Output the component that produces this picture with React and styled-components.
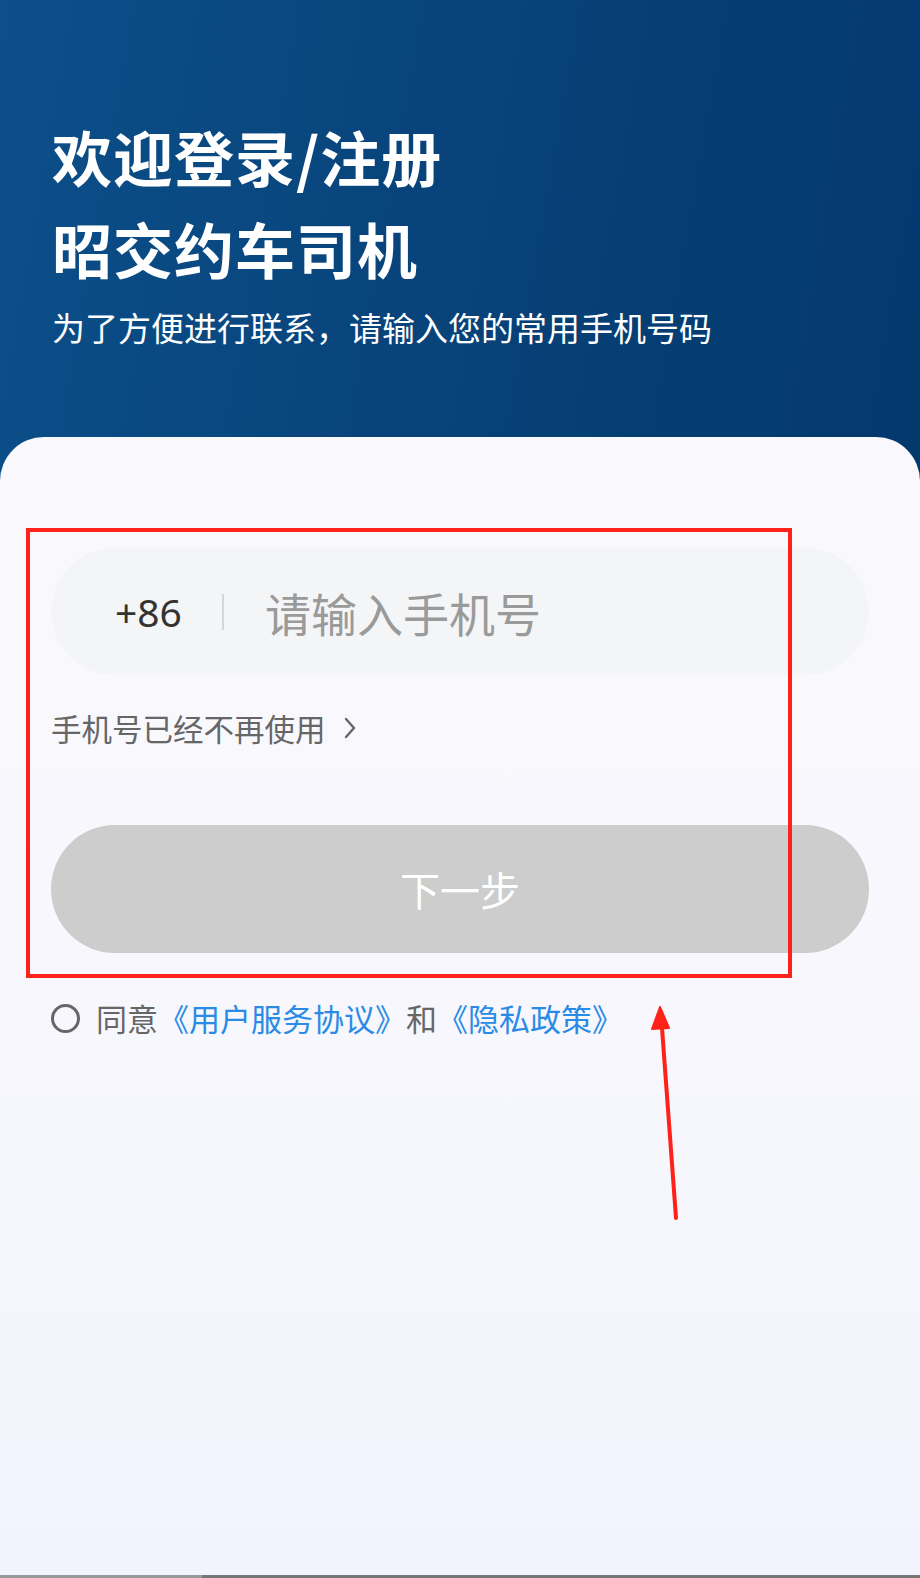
import React from 'react'
import styled, {createGlobalStyle} from 'styled-components'

const GlobalStyle = createGlobalStyle`
  html, body { margin: 0; padding: 0; }
  body { font-family: "Noto Sans", "Noto Sans CJK SC", sans-serif; }
  * { box-sizing: border-box; }
`

const Page = styled.div`
  position: relative;
  width: 920px;
  height: 1578px;
  display: flex;
  flex-direction: column;
  background: linear-gradient(100deg, #0c4f8a 0%, #063f74 55%, #02356a 100%);
  overflow: hidden;
`

const Header = styled.header`
  height: 437px;
  flex-shrink: 0;
  padding: 110px 52px 0;
  color: #fff;
`

const Title = styled.h1`
  margin: 0;
  font-family: "Noto Sans CJK SC", sans-serif;
  font-size: 60px;
  line-height: 92px;
  font-weight: 700;
  letter-spacing: 1px;
`

const Subtitle = styled.p`
  margin: 8px 0 0;
  font-family: "Noto Sans CJK SC", sans-serif;
  font-size: 33px;
  line-height: 50px;
  font-weight: 400;
`

const Card = styled.main`
  flex: 1;
  display: flex;
  flex-direction: column;
  padding: 111px 51px 0;
  border-radius: 44px 44px 0 0;
  background: linear-gradient(180deg, #f9f9fd 0%, #f7f7fd 50%, #f3f3fd 100%);
`

const PhoneField = styled.div`
  height: 127px;
  display: flex;
  align-items: center;
  padding-left: 64px;
  border-radius: 64px;
  background: #f4f5f7;
`

const Prefix = styled.span`
  font-size: 39px;
  color: #333;
`

const Divider = styled.span`
  width: 2px;
  height: 36px;
  margin: 0 41px 0 40px;
  background: #d6d6d6;
`

const Input = styled.input`
  flex: 1;
  border: none;
  outline: none;
  background: transparent;
  font-family: "Noto Sans CJK SC", sans-serif;
  font-size: 46px;
  color: #333;
  padding: 0;
  &::placeholder { color: #9a9a9a; }
`

const LinkRow = styled.a`
  margin-top: 33px;
  display: flex;
  align-items: center;
  gap: 17px;
  font-family: "Noto Sans CJK SC", sans-serif;
  font-size: 30.5px;
  line-height: 40px;
  color: #666;
  text-decoration: none;
`

const NextButton = styled.button`
  margin-top: 77px;
  height: 128px;
  border: none;
  border-radius: 64px;
  background: #cdcdcd;
  color: #fff;
  font-family: "Noto Sans CJK SC", sans-serif;
  font-size: 40px;
`

const Agreement = styled.label`
  margin-top: 45px;
  display: flex;
  align-items: center;
  font-family: "Noto Sans CJK SC", sans-serif;
  font-size: 31px;
  line-height: 40px;
  color: #666;
`

const Radio = styled.span`
  width: 29px;
  height: 29px;
  margin-right: 16px;
  border: 3px solid #666;
  border-radius: 50%;
`

const Doc = styled.span`
  color: #2a8be6;
`

const BottomEdge = styled.div`
  height: 3px;
  flex-shrink: 0;
  background: linear-gradient(90deg, #9a9a9a 0 22%, #777 22% 100%);
`

const Highlight = styled.div`
  position: absolute;
  left: 26px;
  top: 528px;
  width: 766px;
  height: 450px;
  border: 4px solid #ff2218;
  pointer-events: none;
`

const Arrow = styled.svg`
  position: absolute;
  left: 640px;
  top: 1000px;
  pointer-events: none;
`

const Chevron = () => (
  <svg width="14" height="24" viewBox="0 0 14 24">
    <path d="M3 3 L11 12 L3 21" fill="none" stroke="#666" strokeWidth="2.4" strokeLinecap="round" strokeLinejoin="round"/>
  </svg>
)

export default function App() {
  return (
    <>
      <GlobalStyle/>
      <Page>
        <Header>
          <Title>欢迎登录/注册<br/>昭交约车司机</Title>
          <Subtitle>为了方便进行联系，请输入您的常用手机号码</Subtitle>
        </Header>
        <Card>
          <PhoneField>
            <Prefix>+86</Prefix>
            <Divider/>
            <Input placeholder="请输入手机号"/>
          </PhoneField>
          <LinkRow href="#">手机号已经不再使用<Chevron/></LinkRow>
          <NextButton>下一步</NextButton>
          <Agreement>
            <Radio/>
            同意<Doc>《用户服务协议》</Doc>和<Doc>《隐私政策》</Doc>
          </Agreement>
        </Card>
        <BottomEdge/>
        <Highlight/>
        <Arrow width="50" height="225" viewBox="0 0 50 225">
          <path d="M36 218 L22 28" stroke="#ff2218" strokeWidth="4" strokeLinecap="round"/>
          <path d="M20 7 L12 29 L29 28 Z" fill="#ff2218" stroke="#ff2218" strokeWidth="2" strokeLinejoin="round"/>
        </Arrow>
      </Page>
    </>
  )
}
